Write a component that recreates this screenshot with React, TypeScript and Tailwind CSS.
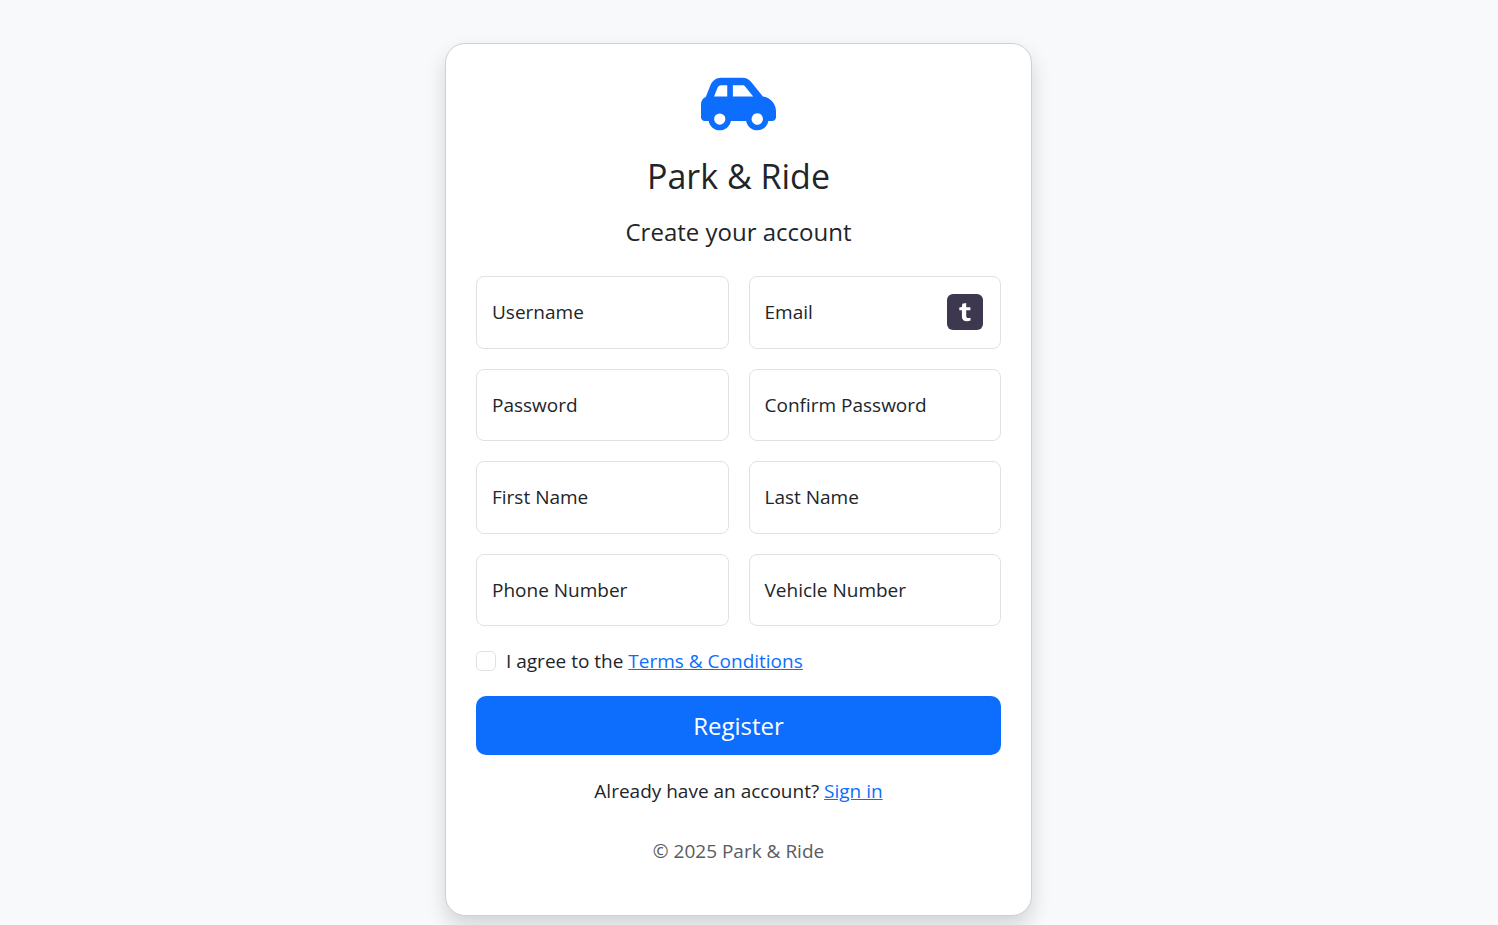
import { FaCarSide } from "react-icons/fa6";

type FieldProps = {
  id: string;
  label: string;
  type?: string;
  badge?: boolean;
};

function MailAliasBadge() {
  return (
    <button
      type="button"
      aria-label="Generate email alias"
      className="absolute top-[18px] right-[18px] flex size-9 items-center justify-center rounded-md bg-[#3d374f]"
    >
      <svg viewBox="0 0 36 36" className="size-9" fill="#ffffff" aria-hidden="true">
        <path d="M15.3 9.8 L19.2 8.9 V13.2 H23.4 V16.3 H19.2 V21.7 C19.2 23.4 19.9 24.1 21.3 24.1 C22 24.1 22.7 24 23.5 23.7 V26.5 C22.5 27 21.3 27.2 19.9 27.2 C16.5 27.2 14.9 25.4 14.9 22.2 V16.3 H12.3 V13.5 L15 13.1 Z" />
      </svg>
    </button>
  );
}

function Field({ id, label, type = "text", badge = false }: FieldProps) {
  return (
    <div className="relative">
      <input
        id={id}
        name={id}
        type={type}
        placeholder=" "
        className="peer size-full rounded-lg border border-[#dee2e6] bg-white px-[15px] pt-6 text-[19px] text-[#212529] outline-none focus:border-[#86b7fe]"
      />
      <label
        htmlFor={id}
        className="pointer-events-none absolute inset-0 flex items-center px-4 peer-focus:items-start peer-focus:text-sm peer-[:not(:placeholder-shown)]:items-start peer-[:not(:placeholder-shown)]:text-sm"
      >
        {label}
      </label>
      {badge && <MailAliasBadge />}
    </div>
  );
}

export default function App() {
  return (
    <main className="flex min-h-screen items-start justify-center overflow-hidden bg-[#f8f9fb] px-4 pt-[43px] pr-[37px] pb-[9px] font-['Open_Sans','Noto_Sans',sans-serif] text-[19px] leading-[30px] text-[#212529]">
      <section className="w-full max-w-[587px] rounded-[20px] border border-[#ced0d2] bg-white px-[30px] pt-[30px] pb-[49px] shadow-[0_10px_20px_rgba(0,0,0,0.15)]">
        <header className="flex flex-col items-center text-center">
          <FaCarSide className="h-[60px] w-[75px] text-[#0d6efd]" aria-hidden="true" />
          <h1 className="mt-[18px] text-[34px] leading-[48px]">Park &amp; Ride</h1>
          <p className="mt-[17px] text-[24px] leading-[30px]">Create your account</p>
        </header>

        <form className="mt-[29px]" onSubmit={(event) => event.preventDefault()}>
          <div className="grid h-[350px] auto-rows-fr grid-cols-2 gap-5">
            <Field id="username" label="Username" />
            <Field id="email" label="Email" type="email" badge />
            <Field id="password" label="Password" type="password" />
            <Field id="confirm-password" label="Confirm Password" type="password" />
            <Field id="first-name" label="First Name" />
            <Field id="last-name" label="Last Name" />
            <Field id="phone" label="Phone Number" type="tel" />
            <Field id="vehicle" label="Vehicle Number" />
          </div>

          <div className="mt-5 flex items-center gap-[10px]">
            <input
              id="terms"
              type="checkbox"
              className="size-5 appearance-none rounded-[5px] border border-[#dee2e6] bg-white checked:border-[#0d6efd] checked:bg-[#0d6efd]"
            />
            <label htmlFor="terms">
              I agree to the{" "}
              <a href="#terms" className="text-[#0d6efd] underline">
                Terms &amp; Conditions
              </a>
            </label>
          </div>

          <button
            type="submit"
            className="mt-5 h-[59px] w-full rounded-[10px] bg-[#0d6efd] text-[24px] text-white"
          >
            Register
          </button>
        </form>

        <p className="mt-[21px] text-center">
          Already have an account?{" "}
          <a href="#signin" className="text-[#0d6efd] underline">
            Sign in
          </a>
        </p>

        <footer className="mt-[30px] text-center text-[#595c5f]">© 2025 Park &amp; Ride</footer>
      </section>
    </main>
  );
}
